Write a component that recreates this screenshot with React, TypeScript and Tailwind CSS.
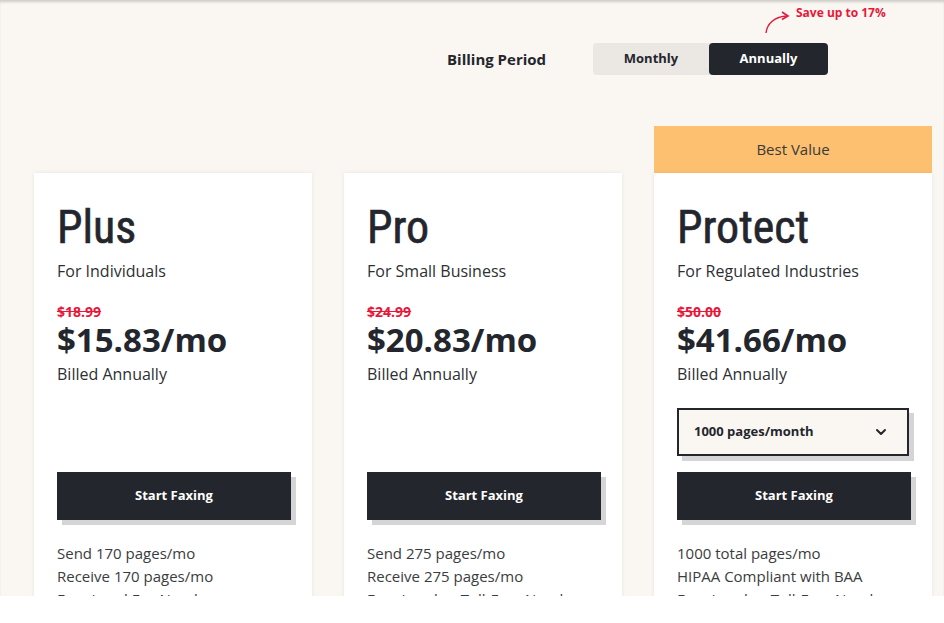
import { ChevronDown } from "lucide-react";

type Plan = {
  name: string;
  tagline: string;
  oldPrice: string;
  price: string;
  features: string[];
  best?: boolean;
};

const plans: Plan[] = [
  {
    name: "Plus",
    tagline: "For Individuals",
    oldPrice: "$18.99",
    price: "$15.83/mo",
    features: ["Send 170 pages/mo", "Receive 170 pages/mo", "Free Local Fax Number"],
  },
  {
    name: "Pro",
    tagline: "For Small Business",
    oldPrice: "$24.99",
    price: "$20.83/mo",
    features: ["Send 275 pages/mo", "Receive 275 pages/mo", "Free Local or Toll-Free Number"],
  },
  {
    name: "Protect",
    tagline: "For Regulated Industries",
    oldPrice: "$50.00",
    price: "$41.66/mo",
    features: ["1000 total pages/mo", "HIPAA Compliant with BAA", "Free Local or Toll-Free Number"],
    best: true,
  },
];

function PlanCard({ plan }: { plan: Plan }) {
  return (
    <div className="w-[278px] shrink-0 flex flex-col">
      {plan.best ? (
        <div className="h-[47px] bg-[#fcc070] flex items-center justify-center text-[15px] text-[#3a3a3a]">
          Best Value
        </div>
      ) : (
        <div className="h-[47px]" />
      )}
      <div className="bg-white shadow-[0_0_4px_rgba(0,0,0,0.08)] px-[23px] pt-[26px] pb-10 h-[460px]">
        <h2 className="text-[46px] leading-[56px] text-[#24262d] [font-family:'Liberation_Sans_Narrow','Roboto_Condensed','Liberation_Sans',sans-serif] [-webkit-text-stroke:0.6px_#24262d]">
          {plan.name}
        </h2>
        <p className="mt-[5px] text-[16px] leading-[22px] text-[#2e2f33]">{plan.tagline}</p>
        <p className="mt-[22px] text-[14px] font-bold leading-[16px] text-[#e8173a] line-through">{plan.oldPrice}</p>
        <p className="text-[33px] font-bold leading-[40px] text-[#24262d]">{plan.price}</p>
        <p className="mt-[3px] text-[16px] leading-[22px] text-[#2e2f33]">Billed Annually</p>
        <div className="h-[87px] pt-[23px]">
          {plan.best && (
            <div className="w-[232px] h-[48px] border-2 border-[#24262d] bg-[#faf7f2] shadow-[5px_5px_0_#d5d5d5] flex items-center justify-between pl-[15px] pr-[18px]">
              <span className="text-[13px] font-bold text-[#24262d]">1000 pages/month</span>
              <ChevronDown className="w-4 h-4 text-[#24262d]" strokeWidth={3} />
            </div>
          )}
        </div>
        <button className="w-[234px] h-[48px] bg-[#24262d] text-white text-[13px] font-bold shadow-[5px_5px_0_#d5d5d5]">
          Start Faxing
        </button>
        <ul className="mt-[22px] text-[15px] leading-[23px] text-[#3b3c40]">
          {plan.features.map((f) => (
            <li key={f}>{f}</li>
          ))}
        </ul>
      </div>
    </div>
  );
}

export default function App() {
  return (
    <div className="bg-white min-h-[623px] [font-family:'Open_Sans','Noto_Sans',sans-serif]">
      <div className="relative h-[596px] overflow-hidden bg-[#faf7f2] shadow-[inset_0_3px_3px_-1px_rgba(0,0,0,0.18)]">
        <div className="relative pl-[447px] pt-[43px] flex items-center">
          <span className="text-[15px] font-bold text-[#24262d] w-[146px]">Billing Period</span>
          <div className="flex h-[32px] rounded-[4px] bg-[#ebe7e2]">
            <div className="w-[116px] flex items-center justify-center text-[13px] font-bold text-[#24262d]">
              Monthly
            </div>
            <div className="w-[119px] flex items-center justify-center rounded-[4px] bg-[#24262d] text-[13px] font-bold text-white">
              Annually
            </div>
          </div>
          <div className="absolute left-[762px] top-[4px] flex items-start">
            <svg width="32" height="32" viewBox="0 0 32 32" fill="none">
              <path d="M4 29 C5 20 12 13 24 12" stroke="#e8173a" strokeWidth="1.4" fill="none" />
              <path d="M20 8 L26 12 L20 15.5" stroke="#e8173a" strokeWidth="1.6" fill="none" />
            </svg>
            <span className="ml-[2px] mt-[0px] text-[12px] font-bold text-[#e8173a]">Save up to 17%</span>
          </div>
        </div>
        <div className="flex gap-[32px] pl-[34px] mt-[51px]">
          {plans.map((p) => (
            <PlanCard key={p.name} plan={p} />
          ))}
        </div>
      </div>
    </div>
  );
}
